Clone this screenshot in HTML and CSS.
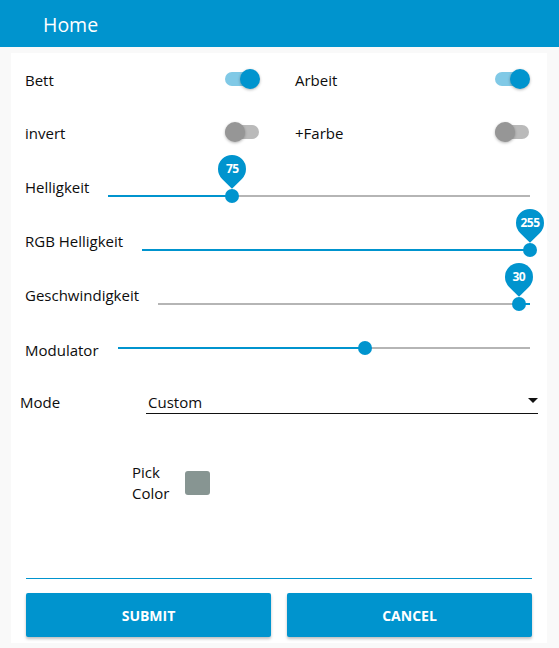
FILE: index.html
```html
<!DOCTYPE html>
<html lang="de">
<head>
<meta charset="utf-8">
<title>Home</title>
<link rel="stylesheet" href="styles.css">
</head>
<body>
<header class="appbar">Home</header>
<main class="card">
  <div class="toggles">
    <div class="tcell"><span class="lbl">Bett</span><span class="switch on"><span class="track"></span><span class="knob"></span></span></div>
    <div class="tcell"><span class="lbl">Arbeit</span><span class="switch on"><span class="track"></span><span class="knob"></span></span></div>
    <div class="tcell"><span class="lbl">invert</span><span class="switch"><span class="track"></span><span class="knob"></span></span></div>
    <div class="tcell"><span class="lbl">+Farbe</span><span class="switch"><span class="track"></span><span class="knob"></span></span></div>
  </div>

  <div class="srow">
    <span class="lbl slbl">Helligkeit</span>
    <div class="slider low">
      <div class="fill" style="left:0;width:29.4%"></div>
      <div class="thumb" style="left:29.4%"><span class="pin"></span><span class="pinval">75</span></div>
    </div>
  </div>
  <div class="srow">
    <span class="lbl slbl">RGB Helligkeit</span>
    <div class="slider low">
      <div class="fill" style="left:0;width:100%"></div>
      <div class="thumb" style="left:100%"><span class="pin"></span><span class="pinval">255</span></div>
    </div>
  </div>
  <div class="srow">
    <span class="lbl slbl">Geschwindigkeit</span>
    <div class="slider low">
      <div class="fill" style="left:97%;right:0"></div>
      <div class="thumb" style="left:97%"><span class="pin"></span><span class="pinval">30</span></div>
    </div>
  </div>
  <div class="srow">
    <span class="lbl slbl mod">Modulator</span>
    <div class="slider">
      <div class="fill" style="left:0;width:60%"></div>
      <div class="thumb" style="left:60%"></div>
    </div>
  </div>

  <div class="moderow">
    <span class="lbl modelbl">Mode</span>
    <div class="select"><span class="selval">Custom</span><span class="caret"></span></div>
  </div>

  <div class="picker">
    <span class="lbl picklbl">Pick Color</span>
    <span class="swatch"></span>
  </div>

  <div class="spacer"></div>

  <div class="footer">
    <div class="rule"></div>
    <div class="buttons">
      <button class="btn">SUBMIT</button>
      <button class="btn">CANCEL</button>
    </div>
  </div>
</main>
</body>
</html>
```
FILE: styles.css
```css
* { box-sizing: border-box; }
html, body { margin: 0; padding: 0; }
body {
  background: #f9f9f9;
  font-family: "Open Sans", "Noto Sans", sans-serif;
  color: #0d0d0d;
  width: 559px;
  height: 648px;
  overflow: hidden;
}
.appbar {
  height: 47px;
  background: #0094ce;
  color: #fff;
  font-size: 19.5px;
  font-weight: 500;
  line-height: 47px;
  padding: 1px 0 0 43px;
}
.card {
  margin: 6px 12px 0 11px;
  height: 590px;
  background: #fff;
  display: flex;
  flex-direction: column;
  padding: 0 17px 6px 14px;
}
.lbl { font-size: 15px; line-height: 20px; white-space: nowrap; }

.toggles {
  display: grid;
  grid-template-columns: 235px 235px;
  column-gap: 35px;
  grid-template-rows: 52px 54px;
}
.tcell { display: flex; align-items: center; justify-content: space-between; }
.tcell .lbl { padding-top: 1px; }
.switch { position: relative; width: 35px; height: 20px; display: block; }
.switch .track {
  position: absolute; left: 0; top: 3px;
  width: 34px; height: 14px; border-radius: 7px;
  background: #bababa;
}
.switch .knob {
  position: absolute; left: 0; top: 0;
  width: 20px; height: 20px; border-radius: 50%;
  background: #969696;
  box-shadow: 0 1px 3px rgba(0,0,0,0.3);
}
.switch.on .track { background: #80c9e6; }
.switch.on .knob { left: auto; right: 0; background: #0094ce; }

.srow { height: 54px; display: flex; align-items: center; gap: 19px; }
.slbl { padding-top: 2px; }
.slbl.mod { padding-top: 3px; }
.slider {
  position: relative;
  flex: 1;
  height: 2px;
  background: #b5b5b5;
}
.slider.low { margin-top: 20px; }
.fill { position: absolute; top: 0; bottom: 0; background: #0094ce; }
.thumb {
  position: absolute; top: 1px;
  width: 14px; height: 14px; margin: -7px 0 0 -7px;
  border-radius: 50%;
  background: #0094ce;
}
.pin {
  position: absolute;
  left: -7px; top: -34px;
  width: 28px; height: 28px;
  background: #0094ce;
  border-radius: 50% 50% 50% 0;
  transform: rotate(-45deg);
}
.pinval {
  position: absolute;
  left: -7px; top: -34px;
  width: 28px; height: 28px;
  line-height: 28px;
  text-align: center;
  color: #fff;
  font-size: 12px;
  font-weight: 700;
  letter-spacing: -0.5px;
}

.moderow {
  height: 54px;
  display: flex;
  align-items: center;
  margin: 0 -8px 0 -5px;
}
.modelbl { width: 126px; }
.select {
  flex: 1;
  display: flex;
  align-items: center;
  justify-content: space-between;
  border-bottom: 1px solid #111;
  padding: 1px 0 1px 2px;
}
.selval { font-size: 15px; line-height: 20px; }
.caret {
  width: 0; height: 0;
  border-left: 5px solid transparent;
  border-right: 5px solid transparent;
  border-top: 5px solid #111;
  margin-bottom: 2px;
}

.picker {
  display: flex;
  align-items: center;
  margin: 33px 0 0 107px;
}
.picklbl { white-space: normal; width: 40px; line-height: 21px; }
.swatch {
  width: 25px; height: 24px;
  margin-left: 13px;
  background: #879592;
  border-radius: 3px;
}
.spacer { flex: 1; }
.footer { margin: 0 -2px 0 1px; }
.rule { border-top: 1px solid #0094ce; }
.buttons {
  margin-top: 14px;
  display: grid;
  grid-template-columns: 1fr 1fr;
  column-gap: 16px;
}
.btn {
  height: 44px;
  border: none;
  border-radius: 2px;
  background: #0094ce;
  color: #fff;
  font-family: "Open Sans", "Noto Sans", sans-serif;
  font-size: 14px;
  font-weight: 700;
  box-shadow: 0 2px 3px rgba(0,0,0,0.25);
  padding: 1px 0 0;
}
```
